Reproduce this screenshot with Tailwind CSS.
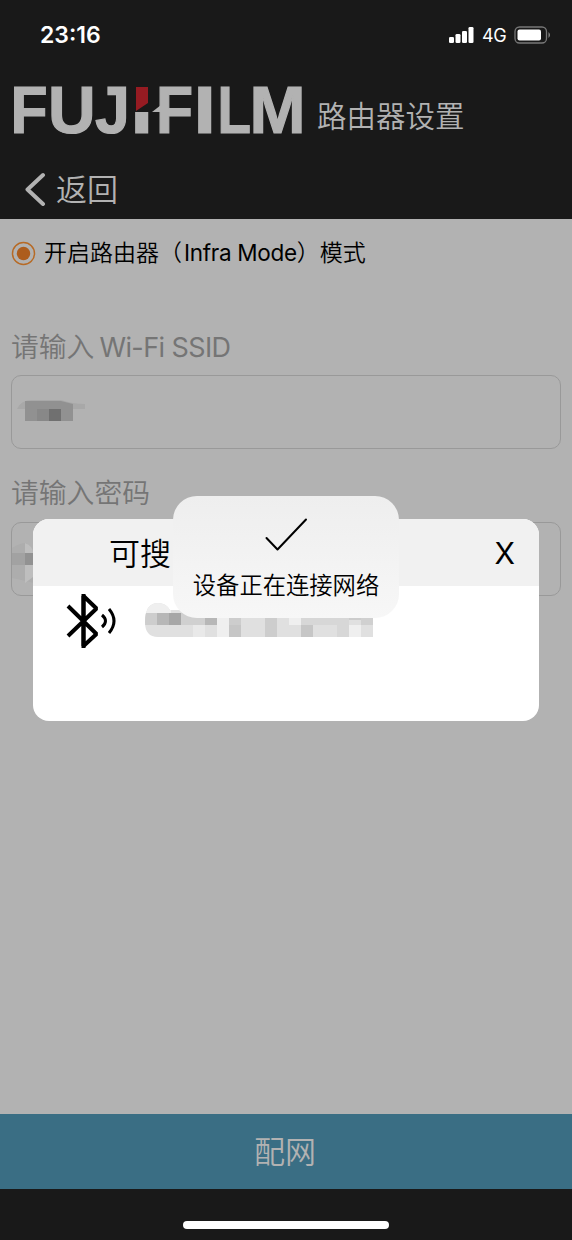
<!DOCTYPE html>
<html lang="zh-CN">
<head>
<meta charset="utf-8">
<meta name="viewport" content="width=device-width">
<title>路由器设置</title>
<script src="https://cdn.jsdelivr.net/npm/@tailwindcss/browser@4"></script>
</head>
<body class="relative flex h-[1240px] w-[572px] flex-col overflow-hidden bg-[#191919] font-['Inter','Noto_Sans_CJK_SC',sans-serif] whitespace-nowrap">
<header class="flex h-[219px] shrink-0 flex-col text-[#b2b2b2]">
  <div class="flex h-[70px] items-center justify-between pr-[20px] pl-[40px] text-white">
    <span class="text-[23px] leading-[68px] font-semibold">23:16</span>
    <div class="flex items-center gap-[7px]">
      <svg class="h-[18px] w-[26px]" viewBox="0 0 26 18" fill="white"><rect x="0" y="11" width="5" height="6" rx="1.3"/><rect x="6.5" y="8" width="5" height="9" rx="1.3"/><rect x="13" y="5" width="5" height="12" rx="1.3"/><rect x="19.5" y="1" width="5" height="16" rx="1.3"/></svg>
      <span class="w-[25px] text-[18px] tracking-[-0.4px]">4G</span>
      <svg class="h-[18px] w-[38px]" viewBox="0 0 38 18"><rect x="1" y="1" width="31.500" height="16" rx="4.5" fill="none" stroke="#777" stroke-width="1.3"/><rect x="3.500" y="3.400" width="23.500" height="11.200" rx="2" fill="white"/><path d="M34.500 6v6q3-3 0-6z" fill="#888"/></svg>
    </div>
  </div>
  <div class="flex h-[85px] items-start">
    <svg class="ml-[8px] h-[85px] w-[302px] shrink-0" viewBox="8 70 302 85">
      <g font-family="Liberation Sans" font-weight="700" font-size="66" fill="#b2b2b2" stroke="#b2b2b2" stroke-width="1.200">
        <text transform="translate(10.500 133) scale(.92 1)">F</text>
        <text x="48" y="133">U</text>
        <text transform="translate(95 133) scale(.95 1)">J</text>
        <text transform="translate(130.500 133) scale(1.22 1)">I</text>
        <text transform="translate(156 133) scale(.92 1)">F</text>
        <text transform="translate(193.500 133) scale(1.22 1)">I</text>
        <text transform="translate(217.500 133) scale(.83 1)">L</text>
        <text transform="translate(249.500 133) scale(1.02 1)">M</text>
      </g>
      <path d="M134 84h16v28h-16z" fill="#191919"/>
      <path d="M136 87h12v16l-12 8z" fill="#961b22"/>
      <path d="M152 112l9-7v7z" fill="#b2b2b2"/>
    </svg>
    <h1 class="mt-[24px] ml-[7px] text-[29.5px] leading-[44px] font-[350]">路由器设置</h1>
  </div>
  <div class="flex h-[64px] items-center pt-[4px] pl-[24px]">
    <svg class="h-[34px] w-[22px]" viewBox="0 0 22 34" fill="none" stroke="#b2b2b2" stroke-width="4" stroke-linecap="round" stroke-linejoin="round"><path d="M19 3L3.500 17.500 19 32"/></svg>
    <span class="ml-[10px] pt-[2px] text-[31px] leading-[58px] font-[350]">返回</span>
  </div>
</header>
<main class="flex h-[895px] shrink-0 flex-col bg-[#b2b2b2] px-[11px]">
  <div class="flex h-[68px] items-center gap-[8px]">
    <svg class="size-[25px] shrink-0" viewBox="0 0 25 25"><circle cx="12.5" cy="12.5" r="11" fill="none" stroke="#b76a25" stroke-width="1.5"/><circle cx="12.5" cy="12.5" r="6.7" fill="#ad5d1d"/></svg>
    <span class="text-[23px] font-[350] text-black">开启路由器（<span class="ml-[2px] text-[22.500px] tracking-[-0.3px] font-normal">Infra Mode</span>）模式</span>
  </div>
  <label class="mt-[37px] h-[51px] text-[27.8px] leading-[46px] font-[350] text-[#757575]">请输入<span class="ml-[5px] text-[27px] tracking-[-0.6px] font-normal">Wi-Fi SSID</span></label>
  <div class="h-[74px] shrink-0 rounded-[10px] border border-[#999] pt-[23px] pl-[5px]">
    <svg class="h-[28px] w-[70px]" viewBox="17 399 70 28"><path d="M17 409q4-9 15-9h29q12 4 24 4v5z" fill="#a8a8a8"/><path d="M25 401h36l12 3v17H25z" fill="#919191"/><path d="M37 409h12v12H37z" fill="#888"/><path d="M49 409h12v12H49z" fill="#707070"/></svg>
  </div>
  <label class="mt-[21px] h-[52px] text-[27.8px] leading-[46px] font-[350] text-[#757575]">请输入密码</label>
  <div class="h-[74px] shrink-0 rounded-[10px] border border-[#999] pt-[18px]">
    <svg class="h-[50px] w-[22px]" viewBox="12 541 22 50"><path d="M12 548q8-5 14-5l8 10v30l-8-2-14-3z" fill="#adadad"/><path d="M12 553h13v12H12z" fill="#a2a2a2"/><path d="M25 553h9v12h-9z" fill="#929292"/><path d="M25 543q8 3 8 10h-8zM25 565h8v12l-8 6z" fill="#bebebe"/></svg>
  </div>
</main>
<footer class="flex h-[126px] shrink-0 flex-col items-center">
  <button class="h-[75px] w-full bg-[#3a6e84] pt-[1px] pr-[2px] text-[31px] font-[350] text-[#b2b2b2]">配网</button>
  <div class="mt-[32px] h-[8px] w-[206px] rounded-full bg-white"></div>
</footer>

<section class="absolute top-[519px] left-[33px] flex h-[202px] w-[506px] flex-col overflow-hidden rounded-[16px] bg-white">
  <div class="flex h-[67px] shrink-0 items-center justify-between bg-[#f1f1f1] pr-[24px] pl-[76px]">
    <h2 class="pt-[2px] text-[31px] leading-[65px] font-[350]">可搜</h2>
    <button class="pt-[2px] text-[30px]">X</button>
  </div>
  <div class="flex pt-[7px] pl-[32px]">
    <svg class="h-[57px] w-[54px]" viewBox="65 593 54 57" fill="none" stroke="black"><path d="M68 606l28.500 28L83.500 646v-50l13 12.500L68 636" stroke-width="4" stroke-linejoin="bevel"/><path d="M83.500 594v54" stroke-width="4"/><path d="M102 615q7 6 0 12M109 609q10 12 0 24" stroke-width="3"/></svg>
    <svg class="mt-[5px] ml-[24px] h-[44px] w-[235px]" viewBox="143 598 235 44"><clipPath id="a"><path d="M145 622q0-19 13-19 8 0 12 7h203v27H158q-13 0-13-15z"/></clipPath><g clip-path="url(#a)"><path d="M143 600h235v40H143z" fill="#e0e0e0"/><path d="M145 601h26v12h-26zM217 613h12v24h-12zM289 613h12v12h-12z" fill="#efefef"/><path d="M145 613h12v12h-12zM229 613h12v12h-12zM265 613h12v24h-12z" fill="#cdcdcd"/><path d="M157 613h12v12h-12zM205 613h12v12h-12z" fill="#b7b7b7"/><path d="M169 613h12v12h-12z" fill="#a7a7a7"/><path d="M181 613h24v12h-24z" fill="#d0d0d0"/><path d="M193 625h12v12h-12z" fill="#e9e9e9"/><path d="M229 625h12v12h-12zM301 625h12v12h-12z" fill="#c6c6c6"/><path d="M301 613h48v12h-48zM337 625h12v12h-12z" fill="#d7d7d7"/><path d="M349 613h12v7h-12z" fill="#ccc"/><path d="M349 625h12v12h-12z" fill="#efefef"/><path d="M361 613h12v12h-12z" fill="#d0d0d0"/></g></svg>
  </div>
</section>

<div role="status" class="absolute top-[496px] left-[173px] flex h-[122px] w-[226px] flex-col items-center rounded-[24px] bg-linear-to-b from-[#eeeeee] to-[#f7f7f7] pt-[21px]">
  <svg class="h-[36px] w-[44px]" viewBox="264 517 44 36" fill="none" stroke="black" stroke-width="2" stroke-linecap="round" stroke-linejoin="round"><path d="M266.500 538l11 11.500 28.500-30"/></svg>
  <span class="mt-[16px] text-[23.300px] leading-[34px] font-[350] text-black">设备正在连接网络</span>
</div>
</body>
</html>
